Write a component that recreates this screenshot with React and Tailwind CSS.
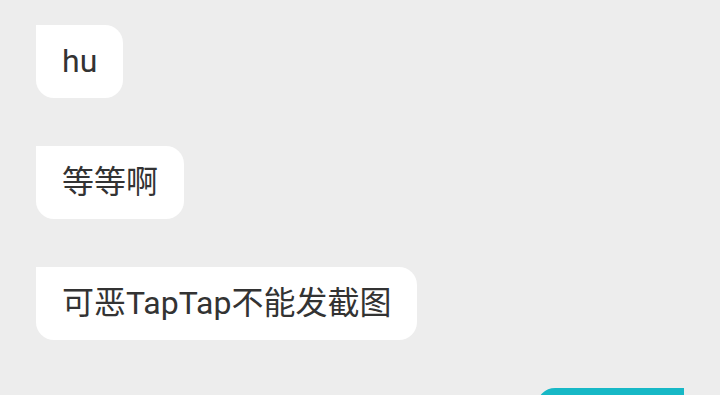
import React from 'react';

const messages = [
  { id: 1, text: 'hu' },
  { id: 2, text: '等等啊' },
  { id: 3, text: '可恶TapTap不能发截图' },
];

const Bubble = ({ text }) => (
  <div className="flex justify-start">
    <div className="bg-white text-[#333333] rounded-[18px] rounded-tl-none px-[26px] py-[14px] text-[32px] leading-[45px]">
      {text}
    </div>
  </div>
);

const App = () => {
  return (
    <div
      className="w-[720px] h-[395px] overflow-hidden bg-[#ededed] px-[36px] pt-[25px]"
      style={{ fontFamily: 'Roboto, "Noto Sans CJK SC", sans-serif' }}
    >
      <div className="flex flex-col gap-[48px]">
        {messages.map((m) => (
          <Bubble key={m.id} text={m.text} />
        ))}
        {/* my reply, only its top edge is on screen */}
        <div className="flex justify-end">
          <div className="w-[147px] h-[73px] bg-[#17b8c6] rounded-[18px] rounded-tr-none" />
        </div>
      </div>
    </div>
  );
};

export default App;
